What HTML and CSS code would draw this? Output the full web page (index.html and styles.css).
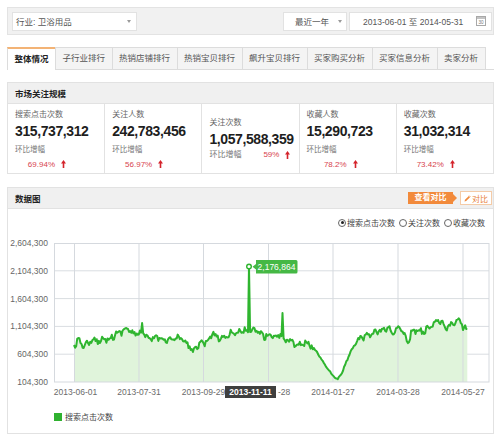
FILE: index.html
```html
<!DOCTYPE html>
<html lang="zh-CN">
<head>
<meta charset="utf-8">
<title>市场概况</title>
<link rel="stylesheet" href="styles.css">
</head>
<body>
<div class="page">
  <div class="toolbar">
    <div class="select select-industry"><span>行业: 卫浴用品</span><i class="caret"></i></div>
    <div class="spacer"></div>
    <div class="select select-period"><span>最近一年</span><i class="caret"></i></div>
    <div class="daterange">
      <span>2013-06-01 至 2014-05-31</span>
      <svg class="cal" width="10" height="10" viewBox="0 0 10 10">
        <rect x="0.5" y="0.5" width="9" height="9" fill="#fff" stroke="#a8a8a8"/>
        <rect x="1" y="1" width="8" height="2" fill="#c4c4c4"/>
        <text x="5" y="8.2" font-size="4.6" text-anchor="middle" fill="#777" font-family="Liberation Sans, sans-serif">30</text>
      </svg>
    </div>
  </div>

  <div class="tabs">
    <div class="tab active">整体情况</div>
    <div class="tab">子行业排行</div>
    <div class="tab">热销店铺排行</div>
    <div class="tab">热销宝贝排行</div>
    <div class="tab">飙升宝贝排行</div>
    <div class="tab">买家购买分析</div>
    <div class="tab">买家信息分析</div>
    <div class="tab">卖家分析</div>
  </div>

  <section class="panel stats">
    <div class="panel-head"><span class="head-title">市场关注规模</span></div>
    <div class="stat-row">
      <div class="stat">
        <div class="stat-label">搜索点击次数</div>
        <div class="stat-value">315,737,312</div>
        <div class="stat-sub">环比增幅</div>
        <div class="stat-change"><span class="pct">69.94%</span><svg class="up" width="5" height="8" viewBox="0 0 5 8"><path d="M2.5 0 L5 3.4 L3.3 3.4 L3.3 8 L1.7 8 L1.7 3.4 L0 3.4 Z"/></svg></div>
      </div>
      <div class="stat">
        <div class="stat-label">关注人数</div>
        <div class="stat-value">242,783,456</div>
        <div class="stat-sub">环比增幅</div>
        <div class="stat-change"><span class="pct">56.97%</span><svg class="up" width="5" height="8" viewBox="0 0 5 8"><path d="M2.5 0 L5 3.4 L3.3 3.4 L3.3 8 L1.7 8 L1.7 3.4 L0 3.4 Z"/></svg></div>
      </div>
      <div class="stat stat-mid">
        <div class="stat-label">关注次数</div>
        <div class="stat-value">1,057,588,359</div>
        <div class="stat-sub stat-inline">环比增幅<span class="pct pct-inline">59%</span><svg class="up" width="5" height="8" viewBox="0 0 5 8"><path d="M2.5 0 L5 3.4 L3.3 3.4 L3.3 8 L1.7 8 L1.7 3.4 L0 3.4 Z"/></svg></div>
      </div>
      <div class="stat">
        <div class="stat-label">收藏人数</div>
        <div class="stat-value">15,290,723</div>
        <div class="stat-sub">环比增幅</div>
        <div class="stat-change"><span class="pct">78.2%</span><svg class="up" width="5" height="8" viewBox="0 0 5 8"><path d="M2.5 0 L5 3.4 L3.3 3.4 L3.3 8 L1.7 8 L1.7 3.4 L0 3.4 Z"/></svg></div>
      </div>
      <div class="stat">
        <div class="stat-label">收藏次数</div>
        <div class="stat-value">31,032,314</div>
        <div class="stat-sub">环比增幅</div>
        <div class="stat-change"><span class="pct">73.42%</span><svg class="up" width="5" height="8" viewBox="0 0 5 8"><path d="M2.5 0 L5 3.4 L3.3 3.4 L3.3 8 L1.7 8 L1.7 3.4 L0 3.4 Z"/></svg></div>
      </div>
    </div>
  </section>

  <section class="panel chart">
    <div class="panel-head">
      <span class="head-title">数据图</span>
      <div class="actions">
        <span class="btn-view">查看对比</span>
        <span class="btn-compare"><svg width="7" height="7" viewBox="0 0 7 7"><path d="M0.5 6.5 L1 4.8 L4.8 1 L6 2.2 L2.2 6 Z" fill="#f08a3c"/><path d="M5.2 0.6 L6.4 1.8" stroke="#f08a3c" stroke-width="0.8"/></svg>对比</span>
      </div>
    </div>
    <div class="radios">
      <label class="radio on"><i></i>搜索点击次数</label>
      <label class="radio"><i></i>关注次数</label>
      <label class="radio"><i></i>收藏次数</label>
    </div>
    <svg class="plot" width="485" height="164" viewBox="8 236 485 164">
      <g class="grid" stroke="#d9dde1" stroke-width="1" fill="none">
        <line x1="54" y1="270.8" x2="489" y2="270.8"/>
        <line x1="54" y1="298.6" x2="489" y2="298.6"/>
        <line x1="54" y1="326.4" x2="489" y2="326.4"/>
        <line x1="54" y1="354.2" x2="489" y2="354.2"/>
      </g>
      <path id="area" fill="#e0f4db" d=""/>
      <g class="grid" stroke="#d5d9de" stroke-width="1" fill="none">
        <line x1="74.5" y1="243" x2="74.5" y2="382"/>
        <line x1="139" y1="243" x2="139" y2="382"/>
        <line x1="203.5" y1="243" x2="203.5" y2="382"/>
        <line x1="268.5" y1="243" x2="268.5" y2="382"/>
        <line x1="333" y1="243" x2="333" y2="382"/>
        <line x1="398" y1="243" x2="398" y2="382"/>
        <line x1="463" y1="243" x2="463" y2="382"/>
        <rect x="54.5" y="243.5" width="434.5" height="138.5"/>
      </g>
      <path id="line" fill="none" stroke="#2fb52f" stroke-width="2" stroke-linejoin="round" d=""/>
      <g class="ylab" font-size="8.5" fill="#666" text-anchor="end" font-family="Liberation Sans, sans-serif">
        <text x="48" y="246">2,604,300</text>
        <text x="48" y="273.8">2,104,300</text>
        <text x="48" y="301.6">1,604,300</text>
        <text x="48" y="329.4">1,104,300</text>
        <text x="48" y="357.2">604,300</text>
        <text x="48" y="385">104,300</text>
      </g>
      <g class="xlab" font-size="8.5" fill="#6a6a6a" text-anchor="middle" font-family="Liberation Sans, sans-serif">
        <text x="75.5" y="395">2013-06-01</text>
        <text x="139" y="395">2013-07-31</text>
        <text x="203.5" y="395">2013-09-29</text>
        <text x="278" y="395" text-anchor="start">-28</text>
        <text x="333" y="395">2014-01-27</text>
        <text x="398" y="395">2014-03-28</text>
        <text x="463" y="395">2014-05-27</text>
      </g>
      <rect x="225" y="386" width="51" height="12" fill="#3f3f3f"/>
      <text x="250.5" y="395" font-size="8.5" fill="#fff" font-weight="bold" text-anchor="middle" font-family="Liberation Sans, sans-serif">2013-11-11</text>
      <circle cx="249" cy="266.5" r="2.3" fill="#fff" stroke="#2fb52f" stroke-width="1.4"/>
      <path d="M256 260 H296 Q297.5 260 297.5 261.5 V272 Q297.5 273.5 296 273.5 H256 V269.5 L252.5 266.7 L256 264 Z" fill="#45b845"/>
      <text x="276.5" y="269.8" font-size="8.5" fill="#fff" text-anchor="middle" font-family="Liberation Sans, sans-serif">2,176,864</text>
    </svg>
    <div class="legend"><i class="swatch"></i>搜索点击次数</div>
  </section>
</div>
<script src="script.js"></script>
</body>
</html>
```

FILE: styles.css
```css
* { box-sizing: border-box; margin: 0; padding: 0; }
body {
  width: 500px; height: 440px; overflow: hidden; background: #fff;
  font-family: "Liberation Sans", "Noto Sans CJK SC", sans-serif;
  font-size: 8px; color: #444;
}
.page { padding: 7px 6px 0 7px; }

/* toolbar */
.toolbar {
  display: flex; align-items: center; height: 28px;
  background: #f1f1f1; border: 1px solid #e3e3e3; padding: 0 1px 0 4px;
}
.select {
  display: flex; align-items: center; justify-content: space-between;
  height: 19px; background: #fff; border: 1px solid #e2e2e2; color: #555;
}
.select-industry { width: 125px; padding: 0 5px 0 3px; font-size: 8.5px; }
.select-period { width: 64px; padding: 0 4px 0 11px; margin-right: 2px; font-size: 8.5px; }
.caret {
  width: 0; height: 0; border-left: 2.5px solid transparent; border-right: 2.5px solid transparent;
  border-top: 3px solid #9a9a9a;
}
.spacer { flex: 1; }
.daterange {
  display: flex; align-items: center; width: 143px; height: 19px;
  background: #fff; border: 1px solid #e2e2e2; padding: 0 5px 0 13px; color: #555; font-size: 8.5px;
}
.cal { margin-left: auto; }

/* tabs */
.tabs { display: flex; align-items: flex-end; margin-top: 12px; border-bottom: 1px solid #dcdcdc; height: 23px; }
.tab {
  height: 22px; line-height: 21px; padding: 0 6.5px; font-size: 8.5px; color: #555;
  background: #f4f4f4; border: 1px solid #dcdcdc; border-bottom: none; margin-right: -1px;
}
.tab.active {
  height: 23px; margin-bottom: -1px; background: #fff; color: #222; font-weight: bold;
  border-top: 2px solid #f3b375; line-height: 21px;
}

/* panels */
.panel { border: 1px solid #e2e2e2; background: #fff; }
.stats { margin-top: 12px; }
.chart { margin-top: 13px; }
.panel-head {
  display: flex; align-items: center; justify-content: space-between;
  height: 21px; background: #f0f0f0; border-bottom: 1px solid #e2e2e2; padding: 0 1px 0 7px;
}
.head-title { font-weight: bold; font-size: 8.5px; color: #222; }

/* stats */
.stat-row { display: flex; height: 69px; }
.stat { flex: 1; padding: 5px 0 0 7px; border-left: 1px solid #e2e2e2; }
.stat:first-child { border-left: none; }
.stat-label { line-height: 12px; color: #666; }
.stat-value {
  margin-top: 2px; line-height: 16px; font-size: 14px; font-weight: bold;
  letter-spacing: -0.4px; color: #1e1e1e;
}
.stat-sub { margin-top: 5px; line-height: 12px; color: #777; font-size: 7.5px; }
.stat-change { margin-top: 2px; height: 12px; display: flex; align-items: center; }
.pct { display: inline-block; width: 40px; text-align: right; color: #d7444e; font-size: 8px; }
.up { margin-left: 6px; fill: #d4232b; }
.stat-mid { padding-top: 13px; }
.stat-mid .stat-sub { margin-top: 2px; display: flex; align-items: center; font-size: 8px; }
.pct-inline { width: 38px; }

/* chart */
.actions { display: flex; align-items: center; }
.btn-view {
  position: relative; height: 12px; line-height: 12px; padding: 0 6.5px; margin-right: 7px;
  background: #f28a3b; color: #fff; font-weight: bold; font-size: 8px;
}
.btn-view::after {
  content: ""; position: absolute; right: -4px; top: 2px;
  border-left: 4px solid #f28a3b; border-top: 4px solid transparent; border-bottom: 4px solid transparent;
}
.btn-compare {
  display: flex; align-items: center; height: 14px; padding: 0 3px 0 3px;
  background: #fff; border: 1px solid #f4cba7; color: #e8823a; font-size: 8px;
}
.btn-compare svg { margin-right: 1px; }
.radios {
  height: 27px; display: flex; justify-content: flex-end; align-items: center;
  padding-right: 8px; color: #444;
}
.radio { display: flex; align-items: center; margin-left: 4px; }
.radio i {
  position: relative; width: 8px; height: 8px; border: 1px solid #666; border-radius: 50%;
  margin-right: 1px; background: #fff;
}
.radio.on i::after {
  content: ""; position: absolute; left: 1.5px; top: 1.5px; width: 3px; height: 3px;
  border-radius: 50%; background: #222;
}
.plot { display: block; }
.legend { display: flex; align-items: center; height: 33px; padding: 0 0 0 46px; color: #444; }
.swatch { width: 8px; height: 8px; background: #2fb12f; margin-right: 3px; }
```

FILE: script.js
```js
(function () {
  var x0 = 74, pxd = 389 / 360, bottom = 382;
  var keys = [[74,347],[77,340],[80,343],[85,345],[90,342],[100,340],[110,338],[120,332],[128,328],[133,335],[137,333],[144,334],[148,340],[157,337],[167,340],[180,338],[188,345],[193,350],[198,345],[207,342],[213,333],[220,339],[227,335],[233,332],[240,333],[245,330],[248,332],[252,332],[257,330],[263,336],[270,335],[277,337],[282,333],[285,343],[288,338],[293,343],[300,345],[308,343],[312,347],[317,352],[323,362],[330,372],[337,380],[342,373],[347,360],[350,353],[355,343],[360,340],[367,335],[377,332],[387,329],[393,332],[402,328],[407,342],[413,330],[423,332],[432,325],[437,319],[443,325],[450,327],[455,322],[460,320],[463,327],[468,332]];
  function base(x) {
    for (var i = 1; i < keys.length; i++) {
      if (x <= keys[i][0]) {
        var a = keys[i - 1], b = keys[i];
        var t = (x - a[0]) / (b[0] - a[0]);
        return a[1] + (b[1] - a[1]) * t;
      }
    }
    return keys[keys.length - 1][1];
  }
  var s = 12345;
  function rnd() { s = (s * 16807) % 2147483647; return s / 2147483647; }
  var pts = [];
  for (var d = 0; d <= 364; d++) {
    var x = x0 + d * pxd;
    var k = (x > 315 && x < 352) ? 0.25 : 1;
    var y = base(x) + k * (Math.sin(d * 2 * Math.PI / 7) * 2 + (rnd() - 0.5) * 5);
    pts.push([x, y]);
  }
  pts[162][1] = 266.5;
  pts[193][1] = 313;
  pts[63][1] = 323;
  pts[110][1] = 352;
  var path = 'M' + pts.map(function (p) { return p[0].toFixed(1) + ',' + p[1].toFixed(1); }).join('L');
  var last = pts[pts.length - 1][0].toFixed(1);
  document.getElementById('line').setAttribute('d', path);
  document.getElementById('area').setAttribute('d', path + 'L' + last + ',' + bottom + 'L' + x0 + ',' + bottom + 'Z');
})();
```
